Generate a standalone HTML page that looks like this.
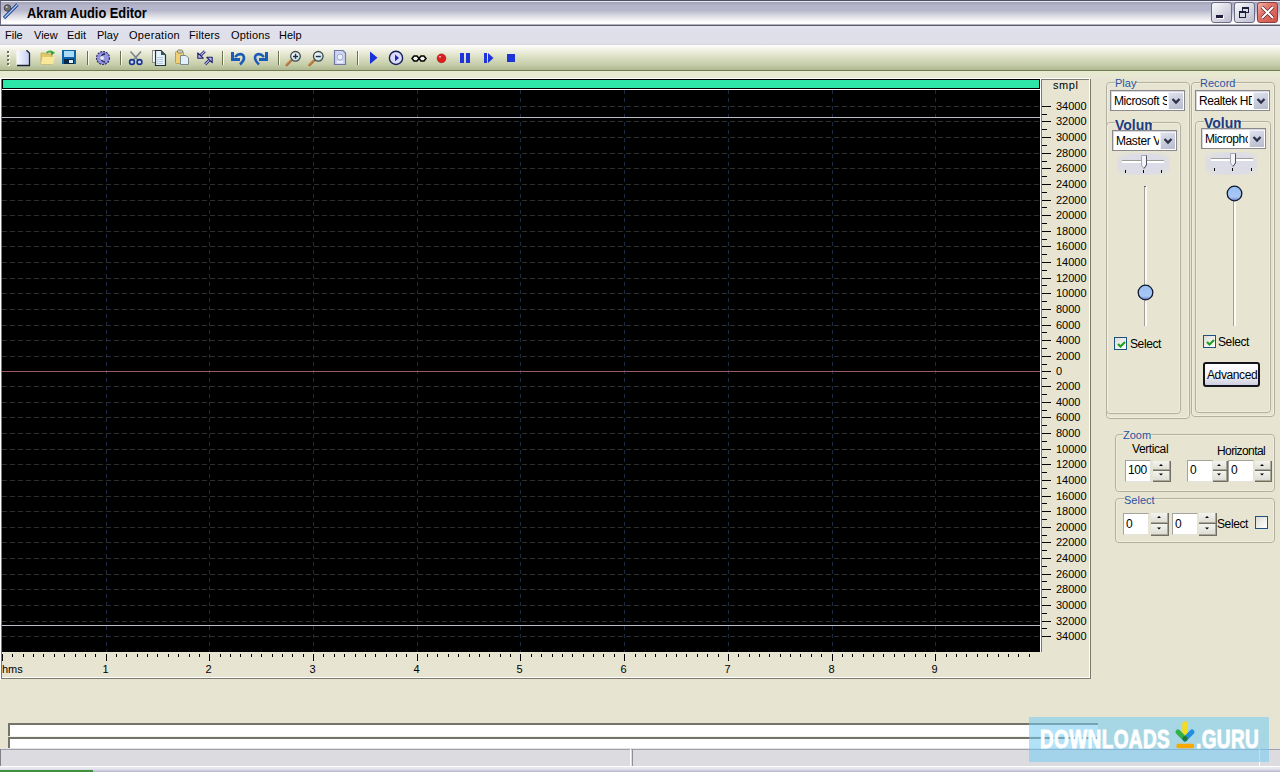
<!DOCTYPE html>
<html><head><meta charset="utf-8">
<style>
*{margin:0;padding:0;box-sizing:border-box}
html,body{width:1280px;height:772px;overflow:hidden;background:#e7e5d1;font-family:"Liberation Sans", sans-serif;font-size:11px;color:#000}
.a{position:absolute}
.c{font-size:12px;letter-spacing:-0.4px}
svg .t{font-family:"Liberation Sans", sans-serif;font-size:11px;fill:#000}
</style></head><body>

<div class="a" style="left:0;top:0;width:1280px;height:26px;background:linear-gradient(#505064 0,#505064 1px,#e8e8f0 1px,#e8e8f0 2px,#a6a6ba 2px,#aaaabe 4px,#b4b4ca 5px,#b6b6cc 10px,#c8c8d8 13px,#dcdce4 16px,#ececf0 19px,#fafafa 21px,#ffffff 23px,#fcfcfc 24px,#b4b4c0 24px,#b4b4c0 25px,#5a5a6a 25px,#5a5a6a 26px)"></div>
<div class="a" style="left:0;top:1px;width:1px;height:24px;background:#6a6a80"></div>
<div class="a" style="left:27px;top:5px;font-weight:bold;font-size:14px;line-height:16px;transform:scaleX(0.915);transform-origin:0 0;white-space:nowrap">Akram Audio Editor</div>
<div class="a" style="left:1211px;top:2px;width:21px;height:21px;border-radius:3px;border:1px solid #6c6c88;background:linear-gradient(135deg,#fafafc 0%,#e0e0ea 40%,#bcbcd0 100%)"><div class="a" style="left:4px;top:12px;width:7px;height:3px;background:#1e1e3c;box-shadow:1px 1px 0 #fff"></div></div>
<div class="a" style="left:1234px;top:2px;width:21px;height:21px;border-radius:3px;border:1px solid #6c6c88;background:linear-gradient(135deg,#fafafc 0%,#e0e0ea 40%,#bcbcd0 100%)"><div class="a" style="left:7px;top:4px;width:7px;height:6px;border:1px solid #1e1e3c;border-top-width:2px"></div><div class="a" style="left:4px;top:8px;width:7px;height:7px;border:1px solid #1e1e3c;border-top-width:2px;background:#d8d8e4"></div></div>
<div class="a" style="left:1257px;top:2px;width:21px;height:21px;border-radius:3px;border:1px solid #8a4040;background:linear-gradient(135deg,#f4b4a8 0%,#e07870 35%,#d05048 100%)"><svg class="a" style="left:0;top:0" width="19" height="19"><path d="M4 4 L15 15 M15 4 L4 15" stroke="#5a2020" stroke-width="3.2"/><path d="M4 4 L15 15 M15 4 L4 15" stroke="#fff" stroke-width="2"/></svg></div>
<svg class="a" style="left:2px;top:2px" width="18" height="18"><path d="M2 16 L15.5 2.5" stroke="#203c90" stroke-width="3.2"/><path d="M2.5 15.5 L15.5 2.5" stroke="#a8d4f8" stroke-width="1.2"/><circle cx="5.5" cy="6" r="3.3" fill="#6c6c70" stroke="#3a3a40" stroke-width="0.8"/><circle cx="4.6" cy="5" r="1" fill="#d0d0d4"/></svg>
<div class="a" style="left:0;top:26px;width:1280px;height:19px;background:linear-gradient(#e6e6f4 0,#e0e0ec 4px,#dfdfe9 18px,#d6d6dc 18px)"></div>
<div class="a" style="left:5px;top:29px;line-height:13px;letter-spacing:0px">File</div>
<div class="a" style="left:34px;top:29px;line-height:13px;letter-spacing:0px">View</div>
<div class="a" style="left:67px;top:29px;line-height:13px;letter-spacing:0px">Edit</div>
<div class="a" style="left:97px;top:29px;line-height:13px;letter-spacing:0px">Play</div>
<div class="a" style="left:129px;top:29px;line-height:13px;letter-spacing:0.3px">Operation</div>
<div class="a" style="left:189px;top:29px;line-height:13px;letter-spacing:0.15px">Filters</div>
<div class="a" style="left:231px;top:29px;line-height:13px;letter-spacing:0.2px">Options</div>
<div class="a" style="left:279px;top:29px;line-height:13px;letter-spacing:0px">Help</div>
<div class="a" style="left:0;top:45px;width:1280px;height:26px;background:linear-gradient(#ffffff 0,#f6f6ee 3px,#dfe2c8 11px,#c4cca8 20px,#b2bc94 24px,#b0ba92 25px,#737a56 25px,#737a56 26px)"></div>
<div class="a" style="left:0;top:71px;width:1280px;height:7px;background:linear-gradient(#e8eacc,#e6e8d6)"></div>
<svg style="position:absolute;left:0;top:75px" width="1100" height="610" shape-rendering="crispEdges"><rect x="0" y="3" width="1090" height="1" fill="#ffffff"/><rect x="0" y="3" width="1" height="602" fill="#ffffff"/><rect x="1" y="4" width="1089" height="1" fill="#7c7a6c"/><rect x="1" y="4" width="1" height="599" fill="#7c7a6c"/><rect x="1089" y="4" width="1" height="599" fill="#ffffff"/><rect x="1090" y="4" width="1" height="600" fill="#7c7a6c"/><rect x="2" y="602" width="1088" height="1" fill="#ffffff"/><rect x="1" y="603" width="1090" height="1" fill="#7c7a6c"/><rect x="2" y="4" width="1038" height="573" fill="#000000"/><rect x="3" y="5" width="1036" height="8" fill="#2de6a8"/><rect x="2" y="14" width="1038" height="1" fill="#ffffff"/><rect x="1040" y="4" width="1" height="573" fill="#ffffff"/><rect x="1041" y="4" width="1" height="573" fill="#7c7a6c"/><line x1="2" y1="31.5" x2="1039" y2="31.5" stroke="#2e2e32" stroke-width="1" stroke-dasharray="5,3"/><line x1="2" y1="46.5" x2="1039" y2="46.5" stroke="#2e2e32" stroke-width="1" stroke-dasharray="5,3"/><line x1="2" y1="62.5" x2="1039" y2="62.5" stroke="#2e2e32" stroke-width="1" stroke-dasharray="5,3"/><line x1="2" y1="78.5" x2="1039" y2="78.5" stroke="#2e2e32" stroke-width="1" stroke-dasharray="5,3"/><line x1="2" y1="93.5" x2="1039" y2="93.5" stroke="#2e2e32" stroke-width="1" stroke-dasharray="5,3"/><line x1="2" y1="109.5" x2="1039" y2="109.5" stroke="#2e2e32" stroke-width="1" stroke-dasharray="5,3"/><line x1="2" y1="125.5" x2="1039" y2="125.5" stroke="#2e2e32" stroke-width="1" stroke-dasharray="5,3"/><line x1="2" y1="140.5" x2="1039" y2="140.5" stroke="#2e2e32" stroke-width="1" stroke-dasharray="5,3"/><line x1="2" y1="156.5" x2="1039" y2="156.5" stroke="#2e2e32" stroke-width="1" stroke-dasharray="5,3"/><line x1="2" y1="171.5" x2="1039" y2="171.5" stroke="#2e2e32" stroke-width="1" stroke-dasharray="5,3"/><line x1="2" y1="187.5" x2="1039" y2="187.5" stroke="#2e2e32" stroke-width="1" stroke-dasharray="5,3"/><line x1="2" y1="203.5" x2="1039" y2="203.5" stroke="#2e2e32" stroke-width="1" stroke-dasharray="5,3"/><line x1="2" y1="218.5" x2="1039" y2="218.5" stroke="#2e2e32" stroke-width="1" stroke-dasharray="5,3"/><line x1="2" y1="234.5" x2="1039" y2="234.5" stroke="#2e2e32" stroke-width="1" stroke-dasharray="5,3"/><line x1="2" y1="250.5" x2="1039" y2="250.5" stroke="#2e2e32" stroke-width="1" stroke-dasharray="5,3"/><line x1="2" y1="265.5" x2="1039" y2="265.5" stroke="#2e2e32" stroke-width="1" stroke-dasharray="5,3"/><line x1="2" y1="281.5" x2="1039" y2="281.5" stroke="#2e2e32" stroke-width="1" stroke-dasharray="5,3"/><line x1="2" y1="296.5" x2="1039" y2="296.5" stroke="#2e2e32" stroke-width="1" stroke-dasharray="5,3"/><line x1="2" y1="311.5" x2="1039" y2="311.5" stroke="#2e2e32" stroke-width="1" stroke-dasharray="5,3"/><line x1="2" y1="327.5" x2="1039" y2="327.5" stroke="#2e2e32" stroke-width="1" stroke-dasharray="5,3"/><line x1="2" y1="342.5" x2="1039" y2="342.5" stroke="#2e2e32" stroke-width="1" stroke-dasharray="5,3"/><line x1="2" y1="358.5" x2="1039" y2="358.5" stroke="#2e2e32" stroke-width="1" stroke-dasharray="5,3"/><line x1="2" y1="374.5" x2="1039" y2="374.5" stroke="#2e2e32" stroke-width="1" stroke-dasharray="5,3"/><line x1="2" y1="389.5" x2="1039" y2="389.5" stroke="#2e2e32" stroke-width="1" stroke-dasharray="5,3"/><line x1="2" y1="405.5" x2="1039" y2="405.5" stroke="#2e2e32" stroke-width="1" stroke-dasharray="5,3"/><line x1="2" y1="421.5" x2="1039" y2="421.5" stroke="#2e2e32" stroke-width="1" stroke-dasharray="5,3"/><line x1="2" y1="436.5" x2="1039" y2="436.5" stroke="#2e2e32" stroke-width="1" stroke-dasharray="5,3"/><line x1="2" y1="452.5" x2="1039" y2="452.5" stroke="#2e2e32" stroke-width="1" stroke-dasharray="5,3"/><line x1="2" y1="467.5" x2="1039" y2="467.5" stroke="#2e2e32" stroke-width="1" stroke-dasharray="5,3"/><line x1="2" y1="483.5" x2="1039" y2="483.5" stroke="#2e2e32" stroke-width="1" stroke-dasharray="5,3"/><line x1="2" y1="499.5" x2="1039" y2="499.5" stroke="#2e2e32" stroke-width="1" stroke-dasharray="5,3"/><line x1="2" y1="514.5" x2="1039" y2="514.5" stroke="#2e2e32" stroke-width="1" stroke-dasharray="5,3"/><line x1="2" y1="530.5" x2="1039" y2="530.5" stroke="#2e2e32" stroke-width="1" stroke-dasharray="5,3"/><line x1="2" y1="546.5" x2="1039" y2="546.5" stroke="#2e2e32" stroke-width="1" stroke-dasharray="5,3"/><line x1="2" y1="561.5" x2="1039" y2="561.5" stroke="#2e2e32" stroke-width="1" stroke-dasharray="5,3"/><line x1="106.5" y1="15" x2="106.5" y2="577" stroke="#1e2a44" stroke-width="1" stroke-dasharray="4,4"/><line x1="209.5" y1="15" x2="209.5" y2="577" stroke="#1e2a44" stroke-width="1" stroke-dasharray="4,4"/><line x1="313.5" y1="15" x2="313.5" y2="577" stroke="#1e2a44" stroke-width="1" stroke-dasharray="4,4"/><line x1="417.5" y1="15" x2="417.5" y2="577" stroke="#1e2a44" stroke-width="1" stroke-dasharray="4,4"/><line x1="520.5" y1="15" x2="520.5" y2="577" stroke="#1e2a44" stroke-width="1" stroke-dasharray="4,4"/><line x1="624.5" y1="15" x2="624.5" y2="577" stroke="#1e2a44" stroke-width="1" stroke-dasharray="4,4"/><line x1="728.5" y1="15" x2="728.5" y2="577" stroke="#1e2a44" stroke-width="1" stroke-dasharray="4,4"/><line x1="832.5" y1="15" x2="832.5" y2="577" stroke="#1e2a44" stroke-width="1" stroke-dasharray="4,4"/><line x1="935.5" y1="15" x2="935.5" y2="577" stroke="#1e2a44" stroke-width="1" stroke-dasharray="4,4"/><rect x="2" y="42" width="1038" height="1" fill="#bcbcc8"/><rect x="2" y="550" width="1038" height="1" fill="#bcbcc8"/><rect x="2" y="296" width="1038" height="1" fill="#a05a64"/><rect x="1042" y="31" width="9" height="1" fill="#000"/><text x="1056" y="35" class="t">34000</text><rect x="1042" y="39" width="5" height="1" fill="#000"/><rect x="1042" y="46" width="9" height="1" fill="#000"/><text x="1056" y="50" class="t">32000</text><rect x="1042" y="54" width="5" height="1" fill="#000"/><rect x="1042" y="62" width="9" height="1" fill="#000"/><text x="1056" y="66" class="t">30000</text><rect x="1042" y="70" width="5" height="1" fill="#000"/><rect x="1042" y="78" width="9" height="1" fill="#000"/><text x="1056" y="82" class="t">28000</text><rect x="1042" y="86" width="5" height="1" fill="#000"/><rect x="1042" y="93" width="9" height="1" fill="#000"/><text x="1056" y="97" class="t">26000</text><rect x="1042" y="101" width="5" height="1" fill="#000"/><rect x="1042" y="109" width="9" height="1" fill="#000"/><text x="1056" y="113" class="t">24000</text><rect x="1042" y="117" width="5" height="1" fill="#000"/><rect x="1042" y="125" width="9" height="1" fill="#000"/><text x="1056" y="129" class="t">22000</text><rect x="1042" y="132" width="5" height="1" fill="#000"/><rect x="1042" y="140" width="9" height="1" fill="#000"/><text x="1056" y="144" class="t">20000</text><rect x="1042" y="148" width="5" height="1" fill="#000"/><rect x="1042" y="156" width="9" height="1" fill="#000"/><text x="1056" y="160" class="t">18000</text><rect x="1042" y="164" width="5" height="1" fill="#000"/><rect x="1042" y="171" width="9" height="1" fill="#000"/><text x="1056" y="175" class="t">16000</text><rect x="1042" y="179" width="5" height="1" fill="#000"/><rect x="1042" y="187" width="9" height="1" fill="#000"/><text x="1056" y="191" class="t">14000</text><rect x="1042" y="195" width="5" height="1" fill="#000"/><rect x="1042" y="203" width="9" height="1" fill="#000"/><text x="1056" y="207" class="t">12000</text><rect x="1042" y="210" width="5" height="1" fill="#000"/><rect x="1042" y="218" width="9" height="1" fill="#000"/><text x="1056" y="222" class="t">10000</text><rect x="1042" y="226" width="5" height="1" fill="#000"/><rect x="1042" y="234" width="9" height="1" fill="#000"/><text x="1056" y="238" class="t">8000</text><rect x="1042" y="242" width="5" height="1" fill="#000"/><rect x="1042" y="250" width="9" height="1" fill="#000"/><text x="1056" y="254" class="t">6000</text><rect x="1042" y="257" width="5" height="1" fill="#000"/><rect x="1042" y="265" width="9" height="1" fill="#000"/><text x="1056" y="269" class="t">4000</text><rect x="1042" y="273" width="5" height="1" fill="#000"/><rect x="1042" y="281" width="9" height="1" fill="#000"/><text x="1056" y="285" class="t">2000</text><rect x="1042" y="289" width="5" height="1" fill="#000"/><rect x="1042" y="296" width="9" height="1" fill="#000"/><text x="1056" y="300" class="t">0</text><rect x="1042" y="303" width="5" height="1" fill="#000"/><rect x="1042" y="311" width="9" height="1" fill="#000"/><text x="1056" y="315" class="t">2000</text><rect x="1042" y="319" width="5" height="1" fill="#000"/><rect x="1042" y="327" width="9" height="1" fill="#000"/><text x="1056" y="331" class="t">4000</text><rect x="1042" y="335" width="5" height="1" fill="#000"/><rect x="1042" y="342" width="9" height="1" fill="#000"/><text x="1056" y="346" class="t">6000</text><rect x="1042" y="350" width="5" height="1" fill="#000"/><rect x="1042" y="358" width="9" height="1" fill="#000"/><text x="1056" y="362" class="t">8000</text><rect x="1042" y="366" width="5" height="1" fill="#000"/><rect x="1042" y="374" width="9" height="1" fill="#000"/><text x="1056" y="378" class="t">10000</text><rect x="1042" y="382" width="5" height="1" fill="#000"/><rect x="1042" y="389" width="9" height="1" fill="#000"/><text x="1056" y="393" class="t">12000</text><rect x="1042" y="397" width="5" height="1" fill="#000"/><rect x="1042" y="405" width="9" height="1" fill="#000"/><text x="1056" y="409" class="t">14000</text><rect x="1042" y="413" width="5" height="1" fill="#000"/><rect x="1042" y="421" width="9" height="1" fill="#000"/><text x="1056" y="425" class="t">16000</text><rect x="1042" y="428" width="5" height="1" fill="#000"/><rect x="1042" y="436" width="9" height="1" fill="#000"/><text x="1056" y="440" class="t">18000</text><rect x="1042" y="444" width="5" height="1" fill="#000"/><rect x="1042" y="452" width="9" height="1" fill="#000"/><text x="1056" y="456" class="t">20000</text><rect x="1042" y="460" width="5" height="1" fill="#000"/><rect x="1042" y="467" width="9" height="1" fill="#000"/><text x="1056" y="471" class="t">22000</text><rect x="1042" y="475" width="5" height="1" fill="#000"/><rect x="1042" y="483" width="9" height="1" fill="#000"/><text x="1056" y="487" class="t">24000</text><rect x="1042" y="491" width="5" height="1" fill="#000"/><rect x="1042" y="499" width="9" height="1" fill="#000"/><text x="1056" y="503" class="t">26000</text><rect x="1042" y="506" width="5" height="1" fill="#000"/><rect x="1042" y="514" width="9" height="1" fill="#000"/><text x="1056" y="518" class="t">28000</text><rect x="1042" y="522" width="5" height="1" fill="#000"/><rect x="1042" y="530" width="9" height="1" fill="#000"/><text x="1056" y="534" class="t">30000</text><rect x="1042" y="538" width="5" height="1" fill="#000"/><rect x="1042" y="546" width="9" height="1" fill="#000"/><text x="1056" y="550" class="t">32000</text><rect x="1042" y="553" width="5" height="1" fill="#000"/><rect x="1042" y="561" width="9" height="1" fill="#000"/><text x="1056" y="565" class="t">34000</text><text x="1053" y="14" class="t" letter-spacing="0.6">smpl</text><rect x="2" y="579" width="1" height="7" fill="#000"/><rect x="12" y="579" width="1" height="3" fill="#000"/><rect x="23" y="579" width="1" height="3" fill="#000"/><rect x="33" y="579" width="1" height="3" fill="#000"/><rect x="43" y="579" width="1" height="3" fill="#000"/><rect x="54" y="579" width="1" height="3" fill="#000"/><rect x="64" y="579" width="1" height="3" fill="#000"/><rect x="75" y="579" width="1" height="3" fill="#000"/><rect x="85" y="579" width="1" height="3" fill="#000"/><rect x="95" y="579" width="1" height="3" fill="#000"/><rect x="106" y="579" width="1" height="7" fill="#000"/><rect x="116" y="579" width="1" height="3" fill="#000"/><rect x="126" y="579" width="1" height="3" fill="#000"/><rect x="137" y="579" width="1" height="3" fill="#000"/><rect x="147" y="579" width="1" height="3" fill="#000"/><rect x="157" y="579" width="1" height="3" fill="#000"/><rect x="168" y="579" width="1" height="3" fill="#000"/><rect x="178" y="579" width="1" height="3" fill="#000"/><rect x="189" y="579" width="1" height="3" fill="#000"/><rect x="199" y="579" width="1" height="3" fill="#000"/><rect x="209" y="579" width="1" height="7" fill="#000"/><rect x="220" y="579" width="1" height="3" fill="#000"/><rect x="230" y="579" width="1" height="3" fill="#000"/><rect x="240" y="579" width="1" height="3" fill="#000"/><rect x="251" y="579" width="1" height="3" fill="#000"/><rect x="261" y="579" width="1" height="3" fill="#000"/><rect x="272" y="579" width="1" height="3" fill="#000"/><rect x="282" y="579" width="1" height="3" fill="#000"/><rect x="292" y="579" width="1" height="3" fill="#000"/><rect x="303" y="579" width="1" height="3" fill="#000"/><rect x="313" y="579" width="1" height="7" fill="#000"/><rect x="323" y="579" width="1" height="3" fill="#000"/><rect x="334" y="579" width="1" height="3" fill="#000"/><rect x="344" y="579" width="1" height="3" fill="#000"/><rect x="355" y="579" width="1" height="3" fill="#000"/><rect x="365" y="579" width="1" height="3" fill="#000"/><rect x="375" y="579" width="1" height="3" fill="#000"/><rect x="386" y="579" width="1" height="3" fill="#000"/><rect x="396" y="579" width="1" height="3" fill="#000"/><rect x="406" y="579" width="1" height="3" fill="#000"/><rect x="417" y="579" width="1" height="7" fill="#000"/><rect x="427" y="579" width="1" height="3" fill="#000"/><rect x="437" y="579" width="1" height="3" fill="#000"/><rect x="448" y="579" width="1" height="3" fill="#000"/><rect x="458" y="579" width="1" height="3" fill="#000"/><rect x="469" y="579" width="1" height="3" fill="#000"/><rect x="479" y="579" width="1" height="3" fill="#000"/><rect x="489" y="579" width="1" height="3" fill="#000"/><rect x="500" y="579" width="1" height="3" fill="#000"/><rect x="510" y="579" width="1" height="3" fill="#000"/><rect x="520" y="579" width="1" height="7" fill="#000"/><rect x="531" y="579" width="1" height="3" fill="#000"/><rect x="541" y="579" width="1" height="3" fill="#000"/><rect x="552" y="579" width="1" height="3" fill="#000"/><rect x="562" y="579" width="1" height="3" fill="#000"/><rect x="572" y="579" width="1" height="3" fill="#000"/><rect x="583" y="579" width="1" height="3" fill="#000"/><rect x="593" y="579" width="1" height="3" fill="#000"/><rect x="603" y="579" width="1" height="3" fill="#000"/><rect x="614" y="579" width="1" height="3" fill="#000"/><rect x="624" y="579" width="1" height="7" fill="#000"/><rect x="635" y="579" width="1" height="3" fill="#000"/><rect x="645" y="579" width="1" height="3" fill="#000"/><rect x="655" y="579" width="1" height="3" fill="#000"/><rect x="666" y="579" width="1" height="3" fill="#000"/><rect x="676" y="579" width="1" height="3" fill="#000"/><rect x="686" y="579" width="1" height="3" fill="#000"/><rect x="697" y="579" width="1" height="3" fill="#000"/><rect x="707" y="579" width="1" height="3" fill="#000"/><rect x="718" y="579" width="1" height="3" fill="#000"/><rect x="728" y="579" width="1" height="7" fill="#000"/><rect x="738" y="579" width="1" height="3" fill="#000"/><rect x="749" y="579" width="1" height="3" fill="#000"/><rect x="759" y="579" width="1" height="3" fill="#000"/><rect x="769" y="579" width="1" height="3" fill="#000"/><rect x="780" y="579" width="1" height="3" fill="#000"/><rect x="790" y="579" width="1" height="3" fill="#000"/><rect x="800" y="579" width="1" height="3" fill="#000"/><rect x="811" y="579" width="1" height="3" fill="#000"/><rect x="821" y="579" width="1" height="3" fill="#000"/><rect x="832" y="579" width="1" height="7" fill="#000"/><rect x="842" y="579" width="1" height="3" fill="#000"/><rect x="852" y="579" width="1" height="3" fill="#000"/><rect x="863" y="579" width="1" height="3" fill="#000"/><rect x="873" y="579" width="1" height="3" fill="#000"/><rect x="883" y="579" width="1" height="3" fill="#000"/><rect x="894" y="579" width="1" height="3" fill="#000"/><rect x="904" y="579" width="1" height="3" fill="#000"/><rect x="915" y="579" width="1" height="3" fill="#000"/><rect x="925" y="579" width="1" height="3" fill="#000"/><rect x="935" y="579" width="1" height="7" fill="#000"/><rect x="946" y="579" width="1" height="3" fill="#000"/><rect x="956" y="579" width="1" height="3" fill="#000"/><rect x="966" y="579" width="1" height="3" fill="#000"/><rect x="977" y="579" width="1" height="3" fill="#000"/><rect x="987" y="579" width="1" height="3" fill="#000"/><rect x="998" y="579" width="1" height="3" fill="#000"/><rect x="1008" y="579" width="1" height="3" fill="#000"/><rect x="1018" y="579" width="1" height="3" fill="#000"/><rect x="1029" y="579" width="1" height="3" fill="#000"/><text x="2" y="598" class="t">hms</text><text x="105.5" y="598" class="t" text-anchor="middle">1</text><text x="208.5" y="598" class="t" text-anchor="middle">2</text><text x="312.5" y="598" class="t" text-anchor="middle">3</text><text x="416.5" y="598" class="t" text-anchor="middle">4</text><text x="519.5" y="598" class="t" text-anchor="middle">5</text><text x="623.5" y="598" class="t" text-anchor="middle">6</text><text x="727.5" y="598" class="t" text-anchor="middle">7</text><text x="831.5" y="598" class="t" text-anchor="middle">8</text><text x="934.5" y="598" class="t" text-anchor="middle">9</text></svg>
<svg class="a" style="left:0;top:45px" width="540" height="26"><g shape-rendering="crispEdges"><rect x="8" y="7" width="2" height="2" fill="#ffffff"/><rect x="7" y="6" width="2" height="2" fill="#6c6e5c"/><rect x="8" y="11" width="2" height="2" fill="#ffffff"/><rect x="7" y="10" width="2" height="2" fill="#6c6e5c"/><rect x="8" y="15" width="2" height="2" fill="#ffffff"/><rect x="7" y="14" width="2" height="2" fill="#6c6e5c"/><rect x="8" y="19" width="2" height="2" fill="#ffffff"/><rect x="7" y="18" width="2" height="2" fill="#6c6e5c"/><rect x="87" y="6" width="1" height="14" fill="#6a7050"/><rect x="88" y="6" width="1" height="14" fill="#ffffff" opacity="0.8"/><rect x="120" y="6" width="1" height="14" fill="#6a7050"/><rect x="121" y="6" width="1" height="14" fill="#ffffff" opacity="0.8"/><rect x="222" y="6" width="1" height="14" fill="#6a7050"/><rect x="223" y="6" width="1" height="14" fill="#ffffff" opacity="0.8"/><rect x="278" y="6" width="1" height="14" fill="#6a7050"/><rect x="279" y="6" width="1" height="14" fill="#ffffff" opacity="0.8"/><rect x="357" y="6" width="1" height="14" fill="#6a7050"/><rect x="358" y="6" width="1" height="14" fill="#ffffff" opacity="0.8"/></g><defs>
<linearGradient id="pg" x1="0" y1="0" x2="1" y2="0"><stop offset="0" stop-color="#fbfbff"/><stop offset="1" stop-color="#c4cdf0"/></linearGradient>
<linearGradient id="fold" x1="0" y1="0" x2="0" y2="1"><stop offset="0" stop-color="#fff8c8"/><stop offset="1" stop-color="#e8c050"/></linearGradient>
<linearGradient id="lens" x1="0" y1="0" x2="1" y2="1"><stop offset="0" stop-color="#ffffff"/><stop offset="1" stop-color="#b8d8e8"/></linearGradient>
<linearGradient id="hdl" x1="0" y1="0" x2="1" y2="1"><stop offset="0" stop-color="#f0c070"/><stop offset="1" stop-color="#804020"/></linearGradient>
</defs><path d="M16.5 5.5 H27 L29.5 8 V20.5 H16.5 Z" fill="url(#pg)"/><path d="M26.5 5.200000000000003 L29.5 8.200000000000003 V20.5 H17" fill="none" stroke="#1c2030" stroke-width="1.3"/><path d="M41 8 H45 L46 9 H52 V19 H41 Z" fill="#e4c868" stroke="#c8a850" stroke-width="0.8"/><path d="M41 19 L42.5 12 H55 L53 19 Z" fill="#f8e89a"/><path d="M46.5 8 Q49 5.5 52 7" fill="none" stroke="#48b040" stroke-width="2"/><path d="M50.5 5.5 L55 7.5 L51.5 10.5 Z" fill="#38a038"/><rect x="62" y="5" width="14" height="14" fill="#0e64a8"/><rect x="64" y="6" width="10" height="6" fill="#a8dcf8"/><rect x="64" y="14" width="10" height="5" fill="#082848"/><rect x="69" y="15" width="4" height="3" fill="#e8f0f8"/><circle cx="103" cy="13" r="6.5" fill="#9494e0" stroke="#303068" stroke-width="1.2" stroke-dasharray="2,1"/><path d="M105 9 A4 4 0 1 0 105 17" fill="none" stroke="#202050" stroke-width="1.3"/><circle cx="102" cy="13" r="2" fill="#e8e8f8"/><path d="M130.5 6.5 L138 15 M141 6.5 L133.5 15" stroke="#7c848c" stroke-width="1.6"/><circle cx="132" cy="17" r="2.4" fill="#c8d8f8" stroke="#1a3488" stroke-width="1.6"/><circle cx="139.5" cy="17" r="2.4" fill="#c8d8f8" stroke="#1a3488" stroke-width="1.6"/><rect x="152.5" y="5.5" width="8" height="12" fill="#ffffff" stroke="#8c9090" stroke-width="1"/><path d="M155.5 5.5 H161 L165.5 10 V20.5 H155.5 Z" fill="#e4f2fa" stroke="#283038" stroke-width="1.2"/><path d="M161 5.5 L165.5 10 H161 Z" fill="#305860"/><rect x="157" y="12" width="6" height="1" fill="#b8cce0"/><rect x="157" y="14" width="6" height="1" fill="#b8cce0"/><rect x="157" y="16" width="6" height="1" fill="#b8cce0"/><rect x="157" y="18" width="6" height="1" fill="#b8cce0"/><rect x="175.5" y="6.5" width="8" height="12" rx="1" fill="#f0d070" stroke="#b8a050" stroke-width="1"/><rect x="177.5" y="5" width="5" height="3" rx="1" fill="#d0d0c8" stroke="#808878" stroke-width="1"/><path d="M180.5 10.5 H186 L188.5 13 V19.5 H180.5 Z" fill="#e4f0f8" stroke="#7c8890" stroke-width="1"/><path d="M204.8 6.200000000000003 L200.5 10.5" stroke="#202068" stroke-width="2.8"/><path d="M204.8 6.200000000000003 L200.5 10.5" stroke="#c0c0f4" stroke-width="1.1"/><path d="M197.8 7.799999999999997 V13.200000000000003 H203.2 Z" fill="#b8b8f0" stroke="#202068" stroke-width="1.1" stroke-linejoin="round"/><path d="M205.2 19.299999999999997 L209.5 15" stroke="#202068" stroke-width="2.8"/><path d="M205.2 19.299999999999997 L209.5 15" stroke="#c0c0f4" stroke-width="1.1"/><path d="M212.2 12.299999999999997 V17.700000000000003 L206.8 12.299999999999997 Z" fill="#b8b8f0" stroke="#202068" stroke-width="1.1" stroke-linejoin="round"/><path d="M235 12 Q239 7.5 243 10 Q246 14 240 19.5" fill="none" stroke="#1c5cb8" stroke-width="2.6"/><path d="M231 7 H234 V13 H240 V16 H231 Z" fill="#1c5cb8"/><path d="M264 12 Q260 7.5 256 10 Q253 14 259 19.5" fill="none" stroke="#1c5cb8" stroke-width="2.6"/><path d="M268 7 H265 V13 H259 V16 H268 Z" fill="#1c5cb8"/><path d="M291.0 15.5 L286.5 20" stroke="url(#hdl)" stroke-width="2.6" stroke-linecap="round"/><circle cx="295.5" cy="11.299999999999997" r="4.8" fill="url(#lens)" stroke="#404848" stroke-width="1.3"/><rect x="293.0" y="10.799999999999997" width="5" height="1.4" fill="#203040"/><rect x="294.8" y="8.799999999999997" width="1.4" height="5" fill="#203040"/><path d="M313.8 15.5 L309.3 20" stroke="url(#hdl)" stroke-width="2.6" stroke-linecap="round"/><circle cx="318.3" cy="11.299999999999997" r="4.8" fill="url(#lens)" stroke="#404848" stroke-width="1.3"/><rect x="315.8" y="10.799999999999997" width="5" height="1.4" fill="#203040"/><path d="M334.5 5.5 H343 L345.5 8 V19.5 H334.5 Z" fill="#d0d4f4" stroke="#7078a8" stroke-width="1.2"/><circle cx="340" cy="12" r="3" fill="#e8f0f8" stroke="#a0b0c8" stroke-width="1"/><rect x="337" y="16" width="6" height="2" fill="#f0f0ff"/><path d="M370 6.5 L377.5 12.799999999999997 L370 19 Z" fill="#1830d8"/><circle cx="396" cy="12.899999999999999" r="6.6" fill="#dcdcf8" stroke="#18205c" stroke-width="1.4"/><path d="M395 9.5 L399 12.899999999999999 L395 16.299999999999997 Z" fill="#1c28a8"/><path d="M412 13.5 L414 11 H417 L419 13.5 L417 16 H414 Z M419 13.5 L421 11 H424 L426 13.5 L424 16 H421 Z" fill="#f4f4f0" stroke="#000" stroke-width="1.5"/><circle cx="441.5" cy="13.299999999999997" r="4.4" fill="#d82020" stroke="#b01010" stroke-width="0.6"/><rect x="439" y="11" width="2" height="1.5" fill="#ffb0b0"/><rect x="460" y="8" width="4" height="10" fill="#1c34d8"/><rect x="466" y="8" width="4" height="10" fill="#1c34d8"/><rect x="484" y="8" width="3" height="10" fill="#1c34d8"/><path d="M488 8 L493.5 13 L488 18 Z" fill="#1c34d8"/><rect x="507" y="9" width="8" height="8" fill="#1c34d8"/></svg>
<div class="a" style="left:1106px;top:82px;width:84px;height:337px;border:1px solid #b2b0a0;border-radius:4px"></div><div class="a" style="left:1107px;top:83px;width:82px;height:335px;border:1px solid #f6f5ec;border-radius:3px;opacity:0.5"></div><div class="a" style="left:1115px;top:77px;white-space:nowrap;background:#e7e5d1;color:#2a52a2;font-weight:normal;font-size:11px;line-height:13px;letter-spacing:0">Play</div><div class="a" style="left:1191px;top:82px;width:84px;height:335px;border:1px solid #b2b0a0;border-radius:4px"></div><div class="a" style="left:1192px;top:83px;width:82px;height:333px;border:1px solid #f6f5ec;border-radius:3px;opacity:0.5"></div><div class="a" style="left:1200px;top:77px;white-space:nowrap;background:#e7e5d1;color:#2a52a2;font-weight:normal;font-size:11px;line-height:13px;letter-spacing:0">Record</div><div class="a" style="left:1110px;top:90px;width:75px;height:21px;border:1px solid #8a8a8e;box-shadow:inset 1px 1px 0 #d8d8dc;background:#fff;overflow:hidden"><div class="a c" style="left:3px;top:4px;width:53px;overflow:hidden;white-space:nowrap;line-height:13px">Microsoft Sound</div><div class="a" style="right:1px;top:1px;width:15px;height:17px;border-left:1px solid #f0f2f8;border-top:1px solid #f0f2f8;background:linear-gradient(160deg,#dfe2ee,#c4c8d8 60%,#b8bccc)"><svg class="a" style="left:2px;top:4px" width="10" height="8"><path d="M1.5 2 L5 5.5 L8.5 2" fill="none" stroke="#2c3048" stroke-width="2.3"/></svg></div></div><div class="a" style="left:1195px;top:90px;width:75px;height:21px;border:1px solid #8a8a8e;box-shadow:inset 1px 1px 0 #d8d8dc;background:#fff;overflow:hidden"><div class="a c" style="left:3px;top:4px;width:53px;overflow:hidden;white-space:nowrap;line-height:13px">Realtek HD Audio</div><div class="a" style="right:1px;top:1px;width:15px;height:17px;border-left:1px solid #f0f2f8;border-top:1px solid #f0f2f8;background:linear-gradient(160deg,#dfe2ee,#c4c8d8 60%,#b8bccc)"><svg class="a" style="left:2px;top:4px" width="10" height="8"><path d="M1.5 2 L5 5.5 L8.5 2" fill="none" stroke="#2c3048" stroke-width="2.3"/></svg></div></div><div class="a" style="left:1106px;top:122px;width:75px;height:292px;border:1px solid #b2b0a0;border-radius:4px"></div><div class="a" style="left:1107px;top:123px;width:73px;height:290px;border:1px solid #f6f5ec;border-radius:3px;opacity:0.5"></div><div class="a" style="left:1115px;top:117px;width:37px;overflow:hidden;white-space:nowrap;background:#e7e5d1;color:#1c3c84;font-weight:bold;font-size:14px;line-height:16px;letter-spacing:0">Volume</div><div class="a" style="left:1195px;top:121px;width:76px;height:292px;border:1px solid #b2b0a0;border-radius:4px"></div><div class="a" style="left:1196px;top:122px;width:74px;height:290px;border:1px solid #f6f5ec;border-radius:3px;opacity:0.5"></div><div class="a" style="left:1204px;top:115px;width:37px;overflow:hidden;white-space:nowrap;background:#e7e5d1;color:#1c3c84;font-weight:bold;font-size:14px;line-height:16px;letter-spacing:0">Volume</div><div class="a" style="left:1112px;top:130px;width:65px;height:21px;border:1px solid #8a8a8e;box-shadow:inset 1px 1px 0 #d8d8dc;background:#fff;overflow:hidden"><div class="a c" style="left:3px;top:4px;width:43px;overflow:hidden;white-space:nowrap;line-height:13px">Master Volume</div><div class="a" style="right:1px;top:1px;width:15px;height:17px;border-left:1px solid #f0f2f8;border-top:1px solid #f0f2f8;background:linear-gradient(160deg,#dfe2ee,#c4c8d8 60%,#b8bccc)"><svg class="a" style="left:2px;top:4px" width="10" height="8"><path d="M1.5 2 L5 5.5 L8.5 2" fill="none" stroke="#2c3048" stroke-width="2.3"/></svg></div></div><div class="a" style="left:1201px;top:128px;width:65px;height:21px;border:1px solid #8a8a8e;box-shadow:inset 1px 1px 0 #d8d8dc;background:#fff;overflow:hidden"><div class="a c" style="left:3px;top:4px;width:43px;overflow:hidden;white-space:nowrap;line-height:13px">Microphone</div><div class="a" style="right:1px;top:1px;width:15px;height:17px;border-left:1px solid #f0f2f8;border-top:1px solid #f0f2f8;background:linear-gradient(160deg,#dfe2ee,#c4c8d8 60%,#b8bccc)"><svg class="a" style="left:2px;top:4px" width="10" height="8"><path d="M1.5 2 L5 5.5 L8.5 2" fill="none" stroke="#2c3048" stroke-width="2.3"/></svg></div></div><div class="a" style="left:1117px;top:153px;width:53px;height:22px;background:radial-gradient(ellipse at center,#dcdce6 60%,rgba(220,220,230,0) 100%)"></div><div class="a" style="left:1122px;top:160px;width:42px;height:3px;background:#ffffff;border-top:1px solid #9c9c98"></div><svg class="a" style="left:1140px;top:155px" width="8" height="15"><path d="M1.5 0.5 H6.5 V10 L4 13.5 L1.5 10 Z" fill="#f4f4f8" stroke="#a8a8b4" stroke-width="1"/><path d="M6.5 0.5 V10 L4 13.5" fill="none" stroke="#505068" stroke-width="1"/></svg><div class="a" style="left:1125px;top:170px;width:1px;height:3px;background:#000"></div><div class="a" style="left:1143px;top:170px;width:1px;height:3px;background:#000"></div><div class="a" style="left:1161px;top:170px;width:1px;height:3px;background:#000"></div><div class="a" style="left:1205px;top:152px;width:52px;height:23px;background:radial-gradient(ellipse at center,#dcdce6 60%,rgba(220,220,230,0) 100%)"></div><div class="a" style="left:1211px;top:158px;width:42px;height:3px;background:#ffffff;border-top:1px solid #9c9c98"></div><svg class="a" style="left:1229px;top:153px" width="8" height="15"><path d="M1.5 0.5 H6.5 V10 L4 13.5 L1.5 10 Z" fill="#f4f4f8" stroke="#a8a8b4" stroke-width="1"/><path d="M6.5 0.5 V10 L4 13.5" fill="none" stroke="#505068" stroke-width="1"/></svg><div class="a" style="left:1214px;top:168px;width:1px;height:3px;background:#000"></div><div class="a" style="left:1232px;top:168px;width:1px;height:3px;background:#000"></div><div class="a" style="left:1251px;top:168px;width:1px;height:3px;background:#000"></div><div class="a" style="left:1144px;top:186px;width:3px;height:140px;border-left:1px solid #a0a098;background:#fbfbf4"></div><div class="a" style="left:1144px;top:186px;width:2px;height:1px;background:#606060"></div><svg class="a" style="left:1137px;top:284px" width="17" height="17"><defs><linearGradient id="kn1144" x1="0" y1="0" x2="0" y2="1"><stop offset="0" stop-color="#98c0f4"/><stop offset="0.75" stop-color="#a8c8f4"/><stop offset="1" stop-color="#6070c0"/></linearGradient></defs><circle cx="8.5" cy="8.5" r="7.3" fill="url(#kn1144)" stroke="#101830" stroke-width="1.3"/></svg><div class="a" style="left:1233px;top:186px;width:3px;height:140px;border-left:1px solid #a0a098;background:#fbfbf4"></div><div class="a" style="left:1233px;top:186px;width:2px;height:1px;background:#606060"></div><svg class="a" style="left:1226px;top:185px" width="17" height="17"><defs><linearGradient id="kn1233" x1="0" y1="0" x2="0" y2="1"><stop offset="0" stop-color="#98c0f4"/><stop offset="0.75" stop-color="#a8c8f4"/><stop offset="1" stop-color="#6070c0"/></linearGradient></defs><circle cx="8.5" cy="8.5" r="7.3" fill="url(#kn1233)" stroke="#101830" stroke-width="1.3"/></svg><div class="a" style="left:1114px;top:337px;width:13px;height:13px;border:1px solid #1c5180;background:linear-gradient(135deg,#dcdcd4,#ffffff)"><svg class="a" style="left:1px;top:1px" width="11" height="11"><path d="M2 5 L4.5 7.5 L9 3" fill="none" stroke="#21a121" stroke-width="2.2"/></svg></div><div class="a c" style="left:1130px;top:338px;line-height:13px">Select</div><div class="a" style="left:1203px;top:335px;width:13px;height:13px;border:1px solid #1c5180;background:linear-gradient(135deg,#dcdcd4,#ffffff)"><svg class="a" style="left:1px;top:1px" width="11" height="11"><path d="M2 5 L4.5 7.5 L9 3" fill="none" stroke="#21a121" stroke-width="2.2"/></svg></div><div class="a c" style="left:1218px;top:336px;line-height:13px">Select</div><div class="a" style="left:1203px;top:362px;width:57px;height:25px;border:2px solid #14141c;border-radius:3px;background:linear-gradient(#ffffff,#f2f2f8 55%,#cfcfe0)"><div class="a c" style="left:2px;top:5px;line-height:13px">Advanced</div></div><div class="a" style="left:1115px;top:434px;width:160px;height:58px;border:1px solid #b2b0a0;border-radius:4px"></div><div class="a" style="left:1116px;top:435px;width:158px;height:56px;border:1px solid #f6f5ec;border-radius:3px;opacity:0.5"></div><div class="a" style="left:1123px;top:429px;white-space:nowrap;background:#e7e5d1;color:#2a52a2;font-weight:normal;font-size:11px;line-height:13px;letter-spacing:0">Zoom</div><div class="a c" style="left:1132px;top:443px;line-height:13px">Vertical</div><div class="a c" style="left:1217px;top:445px;line-height:13px;letter-spacing:-0.6px">Horizontal</div><div class="a" style="left:1125px;top:460px;width:26px;height:22px;border:1px solid #a4a49c;border-right-color:#e4e4dc;border-bottom-color:#e4e4dc;background:#fff"><div class="a c" style="left:2px;top:3px;line-height:13px">100</div></div><div class="a" style="left:1153px;top:461px;width:18px;height:21px"><div class="a" style="left:0;top:0px;width:18px;height:10px;background:linear-gradient(#f4f4f0,#dcdcd4);border-right:1px solid #716f64;border-bottom:1px solid #716f64;box-shadow:inset -1px -1px 0 #aca899"><svg class="a" style="left:5px;top:2px" width="6" height="4" fill="#000"><path d="M1 3 L3 1 L5 3 Z"/></svg></div><div class="a" style="left:0;top:10px;width:18px;height:11px;background:linear-gradient(#f4f4f0,#dcdcd4);border-right:1px solid #716f64;border-bottom:1px solid #716f64;box-shadow:inset -1px -1px 0 #aca899"><svg class="a" style="left:5px;top:2px" width="6" height="4" fill="#000"><path d="M1 0.5 L3 2.5 L5 0.5 Z"/></svg></div></div><div class="a" style="left:1187px;top:460px;width:26px;height:22px;border:1px solid #a4a49c;border-right-color:#e4e4dc;border-bottom-color:#e4e4dc;background:#fff"><div class="a c" style="left:2px;top:3px;line-height:13px">0</div></div><div class="a" style="left:1213px;top:461px;width:15px;height:21px"><div class="a" style="left:0;top:0px;width:15px;height:10px;background:linear-gradient(#f4f4f0,#dcdcd4);border-right:1px solid #716f64;border-bottom:1px solid #716f64;box-shadow:inset -1px -1px 0 #aca899"><svg class="a" style="left:3px;top:2px" width="6" height="4" fill="#000"><path d="M1 3 L3 1 L5 3 Z"/></svg></div><div class="a" style="left:0;top:10px;width:15px;height:11px;background:linear-gradient(#f4f4f0,#dcdcd4);border-right:1px solid #716f64;border-bottom:1px solid #716f64;box-shadow:inset -1px -1px 0 #aca899"><svg class="a" style="left:3px;top:2px" width="6" height="4" fill="#000"><path d="M1 0.5 L3 2.5 L5 0.5 Z"/></svg></div></div><div class="a" style="left:1228px;top:460px;width:26px;height:22px;border:1px solid #a4a49c;border-right-color:#e4e4dc;border-bottom-color:#e4e4dc;background:#fff"><div class="a c" style="left:2px;top:3px;line-height:13px">0</div></div><div class="a" style="left:1255px;top:461px;width:17px;height:21px"><div class="a" style="left:0;top:0px;width:17px;height:10px;background:linear-gradient(#f4f4f0,#dcdcd4);border-right:1px solid #716f64;border-bottom:1px solid #716f64;box-shadow:inset -1px -1px 0 #aca899"><svg class="a" style="left:4px;top:2px" width="6" height="4" fill="#000"><path d="M1 3 L3 1 L5 3 Z"/></svg></div><div class="a" style="left:0;top:10px;width:17px;height:11px;background:linear-gradient(#f4f4f0,#dcdcd4);border-right:1px solid #716f64;border-bottom:1px solid #716f64;box-shadow:inset -1px -1px 0 #aca899"><svg class="a" style="left:4px;top:2px" width="6" height="4" fill="#000"><path d="M1 0.5 L3 2.5 L5 0.5 Z"/></svg></div></div><div class="a" style="left:1115px;top:498px;width:160px;height:45px;border:1px solid #b2b0a0;border-radius:4px"></div><div class="a" style="left:1116px;top:499px;width:158px;height:43px;border:1px solid #f6f5ec;border-radius:3px;opacity:0.5"></div><div class="a" style="left:1124px;top:494px;white-space:nowrap;background:#e7e5d1;color:#2a52a2;font-weight:normal;font-size:11px;line-height:13px;letter-spacing:0">Select</div><div class="a" style="left:1123px;top:513px;width:26px;height:22px;border:1px solid #a4a49c;border-right-color:#e4e4dc;border-bottom-color:#e4e4dc;background:#fff"><div class="a c" style="left:2px;top:4px;line-height:13px">0</div></div><div class="a" style="left:1151px;top:513px;width:18px;height:23px"><div class="a" style="left:0;top:0px;width:18px;height:11px;background:linear-gradient(#f4f4f0,#dcdcd4);border-right:1px solid #716f64;border-bottom:1px solid #716f64;box-shadow:inset -1px -1px 0 #aca899"><svg class="a" style="left:5px;top:2px" width="6" height="4" fill="#000"><path d="M1 3 L3 1 L5 3 Z"/></svg></div><div class="a" style="left:0;top:11px;width:18px;height:12px;background:linear-gradient(#f4f4f0,#dcdcd4);border-right:1px solid #716f64;border-bottom:1px solid #716f64;box-shadow:inset -1px -1px 0 #aca899"><svg class="a" style="left:5px;top:3px" width="6" height="4" fill="#000"><path d="M1 0.5 L3 2.5 L5 0.5 Z"/></svg></div></div><div class="a" style="left:1172px;top:513px;width:26px;height:22px;border:1px solid #a4a49c;border-right-color:#e4e4dc;border-bottom-color:#e4e4dc;background:#fff"><div class="a c" style="left:2px;top:4px;line-height:13px">0</div></div><div class="a" style="left:1199px;top:513px;width:18px;height:23px"><div class="a" style="left:0;top:0px;width:18px;height:11px;background:linear-gradient(#f4f4f0,#dcdcd4);border-right:1px solid #716f64;border-bottom:1px solid #716f64;box-shadow:inset -1px -1px 0 #aca899"><svg class="a" style="left:5px;top:2px" width="6" height="4" fill="#000"><path d="M1 3 L3 1 L5 3 Z"/></svg></div><div class="a" style="left:0;top:11px;width:18px;height:12px;background:linear-gradient(#f4f4f0,#dcdcd4);border-right:1px solid #716f64;border-bottom:1px solid #716f64;box-shadow:inset -1px -1px 0 #aca899"><svg class="a" style="left:5px;top:3px" width="6" height="4" fill="#000"><path d="M1 0.5 L3 2.5 L5 0.5 Z"/></svg></div></div><div class="a c" style="left:1217px;top:518px;line-height:13px">Select</div><div class="a" style="left:1255px;top:516px;width:13px;height:13px;border:1px solid #1c5180;background:linear-gradient(135deg,#dcdcd4,#ffffff)"></div>
<div class="a" style="left:8px;top:723px;width:1090px;height:13px;border-top:2px solid #747468;border-left:2px solid #747468;background:#fff"></div><div class="a" style="left:10px;top:736px;width:1088px;height:1px;background:#f4f4ee"></div><div class="a" style="left:8px;top:737px;width:1090px;height:11px;border-top:2px solid #747468;border-left:2px solid #747468;background:#fff"></div><div class="a" style="left:0;top:748px;width:1280px;height:18px;background:#dcdce0;border-top:1px solid #e4e4e8"></div><div class="a" style="left:0;top:749px;width:1280px;height:1px;background:#a0a0a6"></div><div class="a" style="left:0;top:749px;width:1px;height:17px;background:#808088"></div><div class="a" style="left:630px;top:749px;width:1px;height:17px;background:#ffffff"></div><div class="a" style="left:632px;top:749px;width:1px;height:17px;background:#909098"></div><div class="a" style="left:1259px;top:749px;width:1px;height:17px;background:#ffffff"></div><div class="a" style="left:0;top:766px;width:1280px;height:1px;background:#ffffff"></div><div class="a" style="left:0;top:767px;width:1280px;height:5px;background:linear-gradient(#ececf2,#e4e4ee 40%,#b4b4cc)"></div><div class="a" style="left:0;top:770px;width:93px;height:2px;background:#40903c"></div><div class="a" style="left:1029px;top:717px;width:240px;height:45px;background:rgba(118,204,242,0.56)"></div><div class="a" style="left:1040px;top:724px;font-weight:bold;font-size:25px;line-height:30px;color:#fff;-webkit-text-stroke:0.9px #fff;transform:scaleX(0.76);transform-origin:0 0;white-space:nowrap;letter-spacing:0.5px">DOWNLOADS</div><div class="a" style="left:1196px;top:724px;font-weight:bold;font-size:25px;line-height:30px;color:#fff;-webkit-text-stroke:0.9px #fff;transform:scaleX(0.76);transform-origin:0 0;white-space:nowrap;letter-spacing:0.5px">.GURU</div><svg class="a" style="left:1172px;top:720px" width="26" height="32"><path d="M13 4 V15" stroke="#f4dc20" stroke-width="5.5" stroke-linecap="round"/><path d="M6 12 L13 19" stroke="#34b048" stroke-width="5" stroke-linecap="round"/><path d="M20 12 L13 19" stroke="#2090e0" stroke-width="5" stroke-linecap="round"/><circle cx="13" cy="18.5" r="2.5" fill="#207838"/><path d="M6.5 26 H20" stroke="#f8a800" stroke-width="4.5" stroke-linecap="round"/></svg>
</body></html>
